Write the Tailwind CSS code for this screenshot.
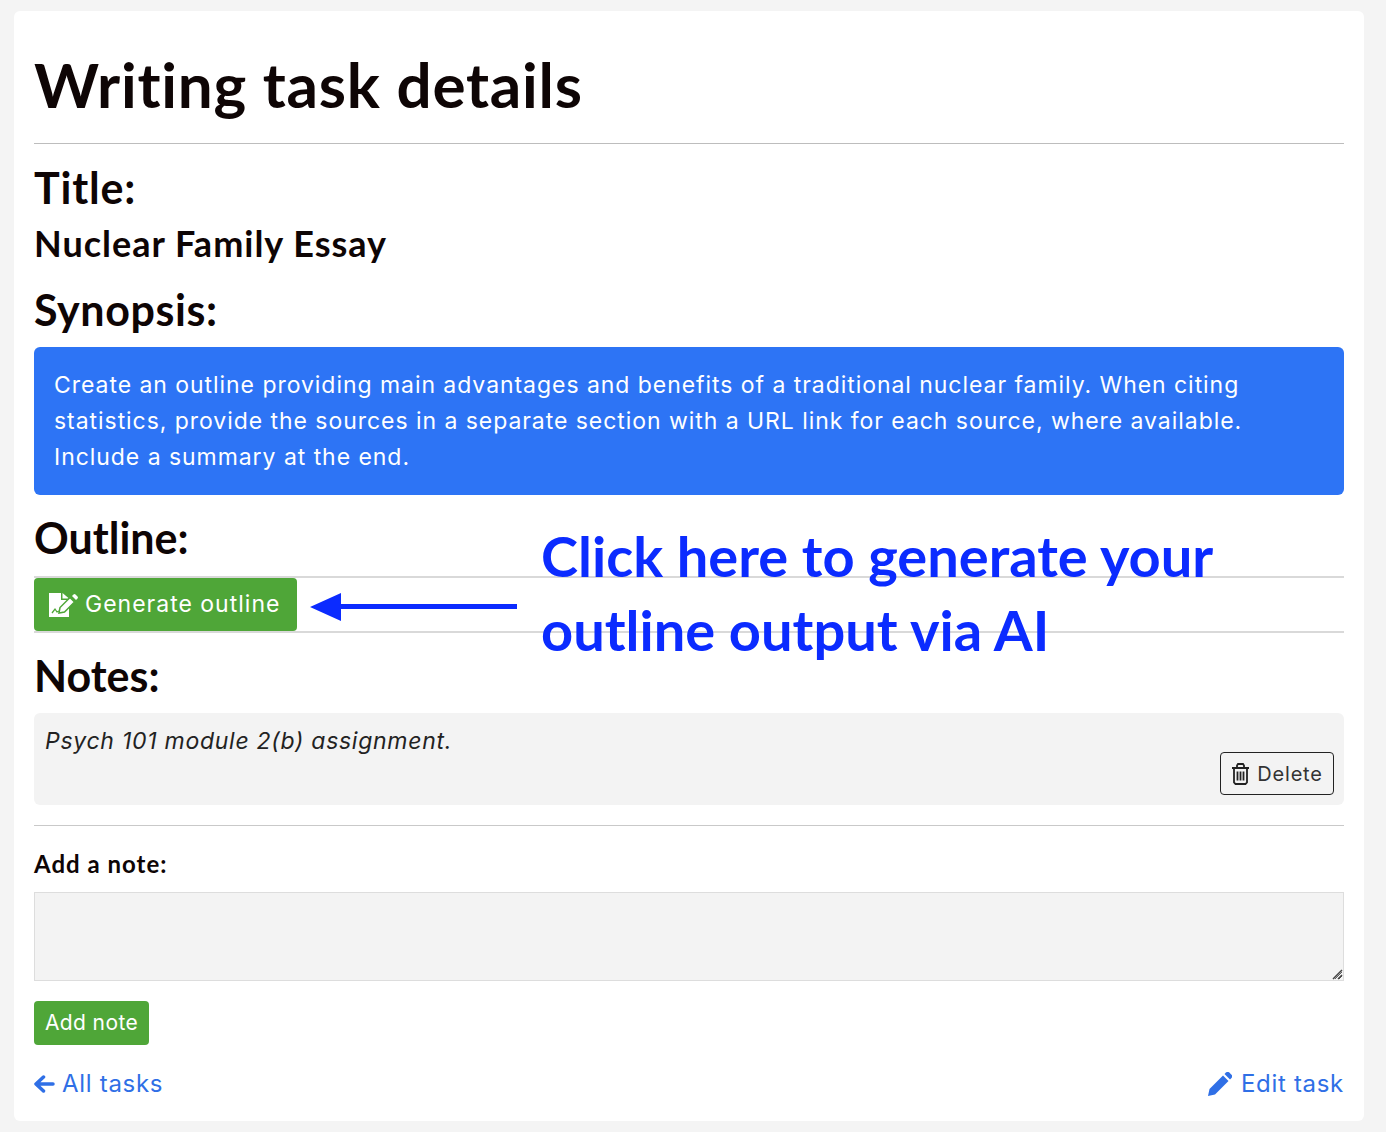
<!DOCTYPE html>
<html lang="en">
<head>
    <meta charset="UTF-8">
    <meta name="viewport" content="width=device-width, initial-scale=1.0">
    <title>Writing task details</title>
    <script src="https://cdn.jsdelivr.net/npm/@tailwindcss/browser@4"></script>
</head>

<body class="bg-[#f4f4f4] h-[1132px] overflow-hidden pt-[11px] pl-[14px] font-['Inter',sans-serif] text-[#0e0505]">
    <div class="relative w-[1350px] h-[1110px] bg-white rounded-md px-5 pt-5">
        <h1 class="h-[113px] pt-[18px] border-b border-[#bdbdbd] font-['Lato',sans-serif] font-bold text-[62px] leading-[70px] tracking-[0.75px]">Writing task details</h1>

        <h2 class="mt-[22px] h-[44px] font-['Lato',sans-serif] font-bold text-[43px] leading-[44px] tracking-[0.8px]">Title:</h2>
        <h3 class="mt-[11px] h-[46px] font-['Lato',sans-serif] font-bold text-[36px] leading-[44px] tracking-[1px]">Nuclear Family Essay</h3>
        <h2 class="mt-[21px] h-[44px] font-['Lato',sans-serif] font-bold text-[43px] leading-[44px] tracking-[0.6px]">Synopsis:</h2>

        <div class="mt-[15px] h-[148px] bg-[#2d74f5] rounded-md px-5 py-[20px] text-white text-[23px] leading-[36px] tracking-[0.95px]">
            Create an outline providing main advantages and benefits of a traditional nuclear family. When citing statistics, provide the sources in a separate section with a URL link for each source, where available. Include a summary at the end.
        </div>

        <h2 class="mt-[21px] h-[44px] font-['Lato',sans-serif] font-bold text-[43px] leading-[44px]">Outline:</h2>
        <div class="mt-[16px] h-[57px] border-y-2 border-[#d9d9d9] flex items-center">
            <button class="h-[53px] w-[263px] bg-[#4fa638] rounded-[4px] flex items-center pl-[15px] gap-[7px] text-white text-[23px] tracking-[1px]">
                <svg class="w-[29px] h-[26px]" viewBox="0 0 29 26" fill="#fff">
                    <path d="M0 1h12v7h8v17H0z"/>
                    <path d="M13.500 1l6.500 5.500h-6.500z"/>
                    <path d="M3 21l3-4 2 3 2-1" stroke="#4fa638" stroke-width="1.300" fill="none"/>
                    <path d="M10 21l1-5.500L21 5.500l4.500 4.500-10 10z" stroke="#4fa638" stroke-width="1.500"/>
                    <path d="M23 4l1.500-1.500a1.500 1.500 0 0 1 2 0l2 2a1.500 1.500 0 0 1 0 2L27 8z"/>
                </svg>
                Generate outline
            </button>
        </div>

        <h2 class="mt-[21px] h-[44px] font-['Lato',sans-serif] font-bold text-[43px] leading-[44px]">Notes:</h2>
        <div class="relative mt-[15px] h-[92px] bg-[#f3f3f3] rounded-md px-[11px] pt-[10px] italic text-[23px] leading-[36px] tracking-[0.73px] text-[#222]">
            Psych 101 module 2(b) assignment.
            <button class="absolute right-[10px] top-[39px] w-[114px] h-[43px] border border-[#222] rounded-[4px] flex items-center justify-center gap-[7px] not-italic text-[20px] tracking-[0.8px] text-[#333]">
                <svg class="w-[19px] h-[22px]" viewBox="0 0 19 22" fill="none" stroke="#222" stroke-width="1.800">
                    <path d="M1 5h17M6 5V2.500L7 1h5l1 1.500V5M3 5v14.500L4.500 21h10l1.500-1.500V5"/>
                    <path d="M6.500 8.500v9M9.500 8.500v9M12.500 8.500v9"/>
                </svg>
                Delete
            </button>
        </div>

        <div class="mt-5 border-t border-[#c9c9c9]"></div>
        <label class="block mt-[24px] h-[28px] font-bold text-[24px] leading-[28px] tracking-[1px] font-['Lato',sans-serif]">Add a note:</label>
        <div class="relative mt-[14px] h-[89px]">
            <textarea class="block w-full h-full bg-[#f3f3f3] border border-[#dddddd]"></textarea>
            <svg class="absolute right-[1px] bottom-[1px] w-[12px] h-[12px] pointer-events-none" viewBox="0 0 12 12" stroke="#444" stroke-width="1.500" fill="none">
                <path d="M2 11L11 2M7 11l4-4"/>
            </svg>
        </div>

        <button class="block mt-5 w-[115px] h-[44px] bg-[#4fa638] rounded-[4px] text-white text-[21px] tracking-[0.4px]">Add note</button>

        <div class="mt-[20px] flex justify-between items-center h-[38px] text-[#2f6fe6] text-[24px] tracking-[0.7px]">
            <a class="flex items-center gap-[7px]" href="#">
                <svg class="w-[21px] h-[20px]" viewBox="0 0 21 20" fill="none" stroke="#2f6fe6" stroke-width="3.500" stroke-linecap="round" stroke-linejoin="round">
                    <path d="M19 10H3M9.500 3L2 10l7.500 7"/>
                </svg>
                All tasks
            </a>
            <a class="flex items-center gap-[9px]" href="#">
                <svg class="w-[24px] h-[24px]" viewBox="0 0 24 24" fill="#2f6fe6">
                    <path d="M0 24l1.500-7L15 3.500l5.500 5.500L7 22.500z"/>
                    <path d="M16.500 2l1.500-1.500a2.500 2.500 0 0 1 3.300 0l2.200 2.200a2.500 2.500 0 0 1 0 3.300L22 7.500z"/>
                </svg>
                Edit task
            </a>
        </div>

        <!-- annotation -->
        <div class="absolute left-[527px] top-[508px] font-['Lato',sans-serif] font-bold text-[56px] leading-[74px] text-[#0b2bff] whitespace-nowrap">
            Click here to generate your<br>outline output via AI
        </div>
        <svg class="absolute left-[296px] top-[581px] w-[208px] h-[30px]" viewBox="0 0 208 30" fill="#0b2bff">
            <path d="M0 15L31 1v11h176v5H31v12z"/>
        </svg>
    </div>
</body>
</html>
